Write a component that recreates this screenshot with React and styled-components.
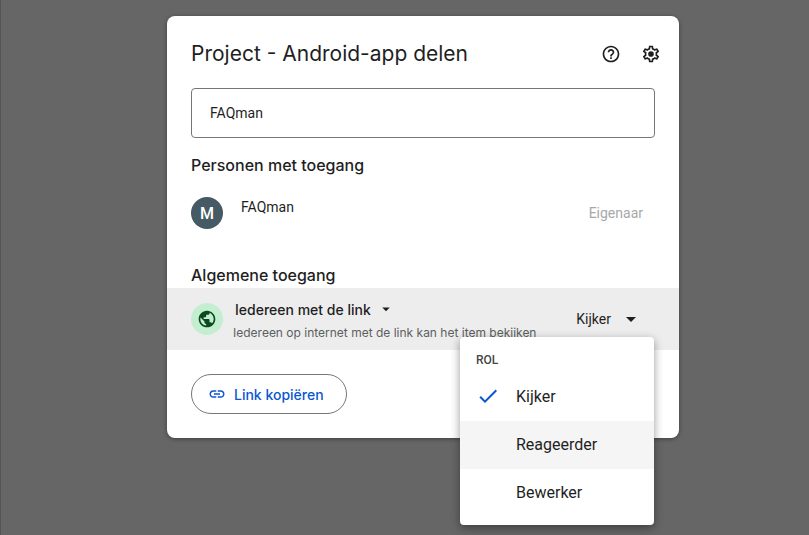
import React, { useState } from 'react';
import styled, { createGlobalStyle } from 'styled-components';
import { MdArrowDropDown, MdCheck, MdHelpOutline, MdLink, MdPublic } from 'react-icons/md';

const displayFont = "Inter, 'Liberation Sans', sans-serif";

const GlobalStyle = createGlobalStyle`
  * {
    box-sizing: border-box;
  }

  body {
    margin: 0;
    background: #666;
    color: #1f1f1f;
    font-family: Roboto, 'Liberation Sans', sans-serif;
  }

  button, input, select {
    font-family: inherit;
    color: inherit;
  }
`;

const Backdrop = styled.main`
  display: flex;
  justify-content: center;
  align-items: flex-start;
  min-height: 100vh;
  padding: 16px 0 16px 36px;
  border-left: 1px solid #555;
`;

const Dialog = styled.section`
  width: 100%;
  max-width: 512px;
  padding-top: 18px;
  background: #fff;
  border-radius: 8px;
  box-shadow: 0 1px 4px rgba(0, 0, 0, 0.4);
`;

const Header = styled.header`
  display: flex;
  align-items: center;
  padding: 0 8px 0 24px;
  margin-bottom: 14px;
`;

const Title = styled.h1`
  flex: 1;
  margin: 0;
  font-family: ${displayFont};
  font-size: 21px;
  font-weight: 400;
  line-height: 28px;
`;

const IconButton = styled.button`
  display: flex;
  align-items: center;
  justify-content: center;
  width: 40px;
  height: 40px;
  padding: 0;
  border: none;
  border-radius: 50%;
  background: none;
  cursor: pointer;
`;

const Section = styled.div`
  padding: 0 24px;
`;

const PeopleInput = styled.input`
  display: block;
  width: 100%;
  height: 50px;
  padding: 0 18px;
  border: 1px solid #747775;
  border-radius: 4px;
  background: #fff;
  font-size: 14px;
`;

const SectionTitle = styled.h2`
  margin: 0;
  padding-bottom: 2px;
  font-family: ${displayFont};
  font-size: 16px;
  font-weight: 500;
  line-height: 22px;
`;

const PeopleTitle = styled(SectionTitle)`
  margin-top: 16px;
`;

const PersonRow = styled.div`
  display: flex;
  align-items: center;
  padding: 19px 12px 35px 0;
`;

const Avatar = styled.div`
  display: flex;
  flex: none;
  align-items: center;
  justify-content: center;
  width: 32px;
  height: 32px;
  border-radius: 50%;
  background: ${({ $bg }) => $bg};
  color: ${({ $color }) => $color};
  font-size: 16px;
  font-weight: 500;
`;

const PersonName = styled.span`
  flex: 1;
  align-self: flex-start;
  margin-left: 18px;
  font-size: 14px;
  line-height: 20px;
`;

const OwnerLabel = styled.span`
  color: #a8a8a8;
  font-size: 14px;
`;

const AccessRow = styled.div`
  display: flex;
  align-items: center;
  height: 62px;
  padding: 0 24px;
  background: #ededed;
`;

const AccessInfo = styled.div`
  flex: 1;
  min-width: 0;
  margin-left: 10px;
`;

const SelectWrap = styled.div`
  display: flex;
  align-items: center;
  gap: 6px;
  padding-left: 2px;
`;

const AccessSelect = styled.select`
  appearance: none;
  field-sizing: content;
  height: 24px;
  padding: 0;
  border: none;
  background: none;
  font-family: ${displayFont};
  font-size: 14px;
  font-weight: 500;
`;

const AccessHint = styled.p`
  margin: 4px 0 0;
  color: #5c5f5e;
  font-family: ${displayFont};
  font-size: 12px;
  line-height: 16px;
  white-space: nowrap;
`;

const RolePicker = styled.div`
  position: relative;
`;

const RoleButton = styled.button`
  display: flex;
  align-items: center;
  gap: 8px;
  height: 36px;
  padding: 0 12px 0 0;
  border: none;
  background: none;
  font-size: 14px;
  cursor: pointer;
`;

const RoleMenu = styled.div`
  position: absolute;
  top: 100%;
  right: 1px;
  z-index: 1;
  width: 194px;
  padding: 10px 0 8px;
  border-radius: 4px;
  background: #fff;
  box-shadow: 0 3px 10px rgba(0, 0, 0, 0.4);
`;

const MenuLabel = styled.div`
  padding: 0 16px;
  color: #444746;
  font-size: 12px;
  font-weight: 500;
  line-height: 26px;
`;

const MenuItem = styled.button`
  display: flex;
  align-items: center;
  width: 100%;
  height: 48px;
  padding: 0 16px 2px;
  border: none;
  background: ${({ $active }) => ($active ? '#f5f5f5' : '#fff')};
  font-size: 16px;
  text-align: left;
  cursor: pointer;
`;

const CheckSlot = styled.span`
  display: flex;
  width: 40px;
  color: #0b57d0;
`;

const Footer = styled.footer`
  padding: 24px;
`;

const CopyButton = styled.button`
  display: inline-flex;
  align-items: center;
  gap: 8px;
  height: 40px;
  padding: 0 22px 0 16px;
  border: 1px solid #747775;
  border-radius: 20px;
  background: #fff;
  color: #0b57d0;
  font-family: ${displayFont};
  font-size: 14px;
  font-weight: 500;
  vertical-align: top;
  cursor: pointer;
`;

const GearIcon = () => (
    <svg width="20" height="20" viewBox="0 0 24 24" fill="currentColor" aria-hidden="true">
        <path d="M19.43 12.98c.04-.32.07-.64.07-.98s-.03-.66-.07-.98l2.11-1.65c.19-.15.24-.42.12-.64l-2-3.46a.5.5 0 0 0-.61-.22l-2.49 1c-.52-.4-1.08-.73-1.69-.98l-.38-2.65A.488.488 0 0 0 14 2h-4c-.25 0-.46.18-.49.42l-.38 2.65c-.61.25-1.17.59-1.69.98l-2.49-1a.5.5 0 0 0-.61.22l-2 3.46c-.13.22-.07.49.12.64l2.11 1.65c-.04.32-.07.65-.07.98s.03.66.07.98l-2.11 1.65c-.19.15-.24.42-.12.64l2 3.46c.12.22.39.3.61.22l2.49-1c.52.4 1.08.73 1.69.98l.38 2.65c.03.24.24.42.49.42h4c.25 0 .46-.18.49-.42l.38-2.65c.61-.25 1.17-.59 1.69-.98l2.49 1c.23.09.49 0 .61-.22l2-3.46c.12-.22.07-.49-.12-.64l-2.11-1.65zm-1.98-1.71c.04.31.05.52.05.73s-.02.43-.05.73l-.14 1.13.89.7 1.08.84-.7 1.21-1.27-.51-1.04-.42-.9.68c-.43.32-.84.56-1.25.73l-1.06.43-.16 1.13-.2 1.35h-1.4l-.19-1.35-.16-1.13-1.06-.43c-.43-.18-.83-.41-1.23-.71l-.91-.7-1.06.43-1.27.51-.7-1.21 1.08-.84.89-.7-.14-1.13c-.03-.31-.05-.54-.05-.74s.02-.43.05-.73l.14-1.13-.89-.7-1.08-.84.7-1.21 1.27.51 1.04.42.9-.68c.43-.32.84-.56 1.25-.73l1.06-.43.16-1.13.2-1.35h1.39l.19 1.35.16 1.13 1.06.43c.43.18.83.41 1.23.71l.91.7 1.06-.43 1.27-.51.7 1.21-1.07.85-.89.7.14 1.13z" />
        <circle cx="12" cy="12" r="3.4" />
    </svg>
);

const roles = ['Kijker', 'Reageerder', 'Bewerker'];

const App = () => {
    const [people, setPeople] = useState('FAQman');
    const [role, setRole] = useState('Kijker');
    const [active, setActive] = useState('Reageerder');
    const [open, setOpen] = useState(true);

    const pickRole = (name) => {
        setRole(name);
        setOpen(false);
    };

    return (
        <Backdrop>
            <GlobalStyle />
            <Dialog role="dialog" aria-labelledby="share-title">
                <Header>
                    <Title id="share-title">Project - Android-app delen</Title>
                    <IconButton aria-label="Help"><MdHelpOutline size={20} /></IconButton>
                    <IconButton aria-label="Instellingen"><GearIcon /></IconButton>
                </Header>

                <Section>
                    <PeopleInput
                        aria-label="Personen toevoegen"
                        value={people}
                        onChange={(e) => setPeople(e.target.value)}
                    />
                    <PeopleTitle>Personen met toegang</PeopleTitle>
                    <PersonRow>
                        <Avatar $bg="#455a64" $color="#fff">M</Avatar>
                        <PersonName>FAQman</PersonName>
                        <OwnerLabel>Eigenaar</OwnerLabel>
                    </PersonRow>
                    <SectionTitle>Algemene toegang</SectionTitle>
                </Section>

                <AccessRow>
                    <Avatar $bg="#c4eed0" $color="#0a4a20"><MdPublic size={20} /></Avatar>
                    <AccessInfo>
                        <SelectWrap>
                            <AccessSelect aria-label="Algemene toegang">
                                <option>Iedereen met de link</option>
                            </AccessSelect>
                            <MdArrowDropDown size={18} />
                        </SelectWrap>
                        <AccessHint>Iedereen op internet met de link kan het item bekijken</AccessHint>
                    </AccessInfo>
                    <RolePicker>
                        <RoleButton aria-haspopup="listbox" aria-expanded={open} onClick={() => setOpen(!open)}>
                            {role}
                            <MdArrowDropDown size={24} />
                        </RoleButton>
                        {open && (
                            <RoleMenu role="listbox" aria-labelledby="role-label">
                                <MenuLabel id="role-label">ROL</MenuLabel>
                                {roles.map((name) => (
                                    <MenuItem
                                        key={name}
                                        role="option"
                                        aria-selected={name === role}
                                        $active={name === active}
                                        onMouseEnter={() => setActive(name)}
                                        onClick={() => pickRole(name)}
                                    >
                                        <CheckSlot>{name === role && <MdCheck size={24} />}</CheckSlot>
                                        {name}
                                    </MenuItem>
                                ))}
                            </RoleMenu>
                        )}
                    </RolePicker>
                </AccessRow>

                <Footer>
                    <CopyButton>
                        <MdLink size={18} />
                        Link kopiëren
                    </CopyButton>
                </Footer>
            </Dialog>
        </Backdrop>
    );
};

export default App;
